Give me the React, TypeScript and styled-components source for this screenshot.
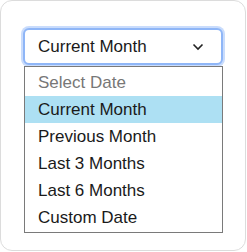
import styled, { createGlobalStyle } from 'styled-components'

const options = ['Current Month', 'Previous Month', 'Last 3 Months', 'Last 6 Months', 'Custom Date']

const GlobalStyle = createGlobalStyle`
    body {
        margin: 0;
        background: #ffffff;
        font-family: 'Liberation Sans', Arial, sans-serif;
    }
`

export default function App() {
    const selected = 'Current Month'

    return (
        <>
            <GlobalStyle />
            <Card>
                <SelectBox>
                    <SelectValue>{selected}</SelectValue>
                    <svg width="12" height="8" viewBox="0 0 12 8">
                        <polyline points="1.5,1.5 6,6 10.5,1.5" fill="none" stroke="#222" strokeWidth="1.6" />
                    </svg>
                </SelectBox>
                <OptionList>
                    <Option $placeholder>Select Date</Option>
                    {options.map((o) => (
                        <Option key={o} $active={o === selected}>
                            {o}
                        </Option>
                    ))}
                </OptionList>
            </Card>
        </>
    )
}

const Card = styled.div`
    box-sizing: border-box;
    width: 246px;
    height: 251px;
    border: 1px solid #dcdcdc;
    border-radius: 12px;
    padding: 27px 0 0 22px;
    display: flex;
    flex-direction: column;
`

const SelectBox = styled.div`
    box-sizing: border-box;
    width: 200px;
    height: 37px;
    border: 2px solid #8fb6f7;
    box-shadow: 0 0 0 2px #c9dcfc;
    border-radius: 6px;
    display: flex;
    align-items: center;
    justify-content: space-between;
    padding: 0 17px 0 13px;
    background: #fff;
`

const SelectValue = styled.span`
    font-size: 17px;
    color: #1a1a1a;
`

const OptionList = styled.div`
    box-sizing: border-box;
    width: 199px;
    margin: 1px 0 0 1px;
    border: 1px solid #7a7a7a;
    padding: 2px 0 1px;
    display: flex;
    flex-direction: column;
`

const Option = styled.div<{ $active?: boolean; $placeholder?: boolean }>`
    height: 27px;
    line-height: 27px;
    padding-left: 13px;
    font-size: 17px;
    color: ${(p) => (p.$placeholder ? '#777777' : '#1a1a1a')};
    background: ${(p) => (p.$active ? '#ade0f3' : 'transparent')};
`
